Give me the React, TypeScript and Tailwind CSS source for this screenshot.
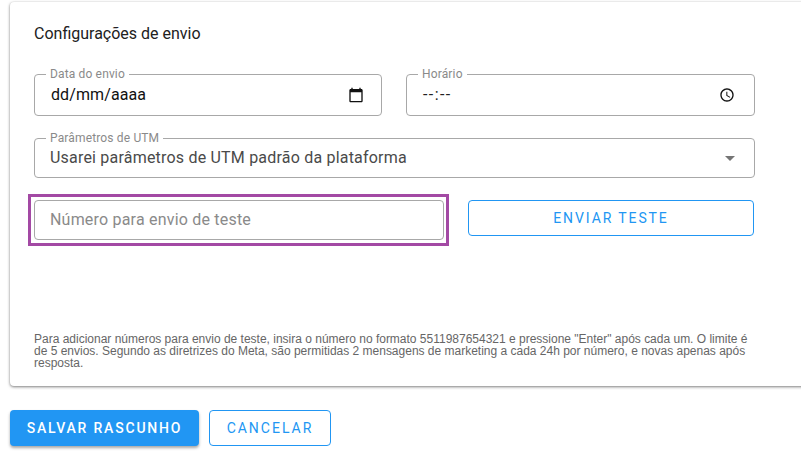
import { ReactNode } from 'react';

const FONT = "font-['Roboto',_'Liberation_Sans',_sans-serif]";

// campo com legenda sobre a borda
function Field({ label, className, children }: { label: string; className: string; children: ReactNode }) {
  return (
    <div className={`relative flex items-center rounded border border-[#a8a8a8] pl-[15px] pr-[17px] ${className}`}>
      <span className="absolute left-[11px] top-[-9px] bg-white px-[4px] text-[12px] leading-[16px] tracking-[0.15px] text-[#8a8a8a]">
        {label}
      </span>
      {children}
    </div>
  );
}

export default function App() {
  return (
    <div className={`h-[460px] w-[801px] overflow-hidden bg-white ${FONT}`}>
      <div className="pl-[10px] pt-[2px]">
        <div className="flex h-[384px] w-[800px] flex-col rounded-l-[4px] bg-white pl-[24px] pt-[22px] shadow-[0_1px_3px_rgba(0,0,0,0.5),0_0_2px_rgba(0,0,0,0.06)]">
          <h2 className="text-[16px] leading-[20px] text-[#212121]">Configurações de envio</h2>

          <div className="mt-[30px] flex gap-[24px]">
            <Field label="Data do envio" className="h-[42px] w-[348px] justify-between">
              <span className="pl-[1px] text-[16px] tracking-[0.1px] text-[#111]">dd/mm/aaaa</span>
              <svg width="16" height="16" viewBox="0 0 24 24" fill="#111">
                <path d="M20 3h-1V1h-2v2H7V1H5v2H4c-1.1 0-2 .9-2 2v16c0 1.1.9 2 2 2h16c1.1 0 2-.9 2-2V5c0-1.100-.9-2-2-2zm0 18H4V8h16v13z" />
              </svg>
            </Field>
            <Field label="Horário" className="h-[42px] w-[349px] justify-between">
              <span className="pl-[1px] text-[16px] tracking-[1.4px] text-[#222]">--:--</span>
              <svg width="16" height="16" viewBox="0 0 24 24" className="mr-[2px]" fill="#111">
                <path d="M11.99 2C6.470 2 2 6.480 2 12s4.470 10 9.990 10C17.520 22 22 17.520 22 12S17.520 2 11.990 2zM12 20c-4.420 0-8-3.580-8-8s3.580-8 8-8 8 3.580 8 8-3.580 8-8 8zm.5-13H11v6l5.250 3.150.75-1.230-4.500-2.670z" />
              </svg>
            </Field>
          </div>

          <Field label="Parâmetros de UTM" className="mt-[22px] h-[40px] w-[721px] justify-between">
            <span className="text-[16px] tracking-[0.2px] text-[#4a4a4a]">Usarei parâmetros de UTM padrão da plataforma</span>
            <svg width="24" height="24" viewBox="0 0 24 24" className="mr-[-5px]" fill="#757575">
              <path d="M7 10l5 5 5-5z" />
            </svg>
          </Field>

          <div className="mt-[16px] ml-[-6px] flex items-start">
            <div className="h-[52px] w-[421px] border-[3px] border-[#a349a4] p-[3px]">
              <div className="flex h-[40px] w-[410px] items-center rounded border border-[#a8a8a8] pl-[15px] text-[16px] tracking-[0.2px] text-[#8a8a8a]">
                Número para envio de teste
              </div>
            </div>
            <button className="ml-[19px] mt-[6px] h-[36px] w-[286px] rounded border border-[#2196f3] text-[14px] tracking-[1.9px] text-[#2196f3]">
              ENVIAR TESTE
            </button>
          </div>

          <p className="mt-[87px] w-[722px] font-['Liberation_Sans',_sans-serif] text-[12px] leading-[12px] tracking-[-0.005px] text-[#666]">
            Para adicionar números para envio de teste, insira o número no formato 5511987654321 e pressione "Enter" após cada um. O limite é de 5 envios. Segundo as diretrizes do Meta, são permitidas 2 mensagens de marketing a cada 24h por número, e novas apenas após resposta.
          </p>
        </div>

        <div className="mt-[24px] flex gap-[10px]">
          <button className="h-[36px] w-[189px] rounded bg-[#2196f3] text-[14px] font-medium tracking-[1.8px] text-white shadow-[0_2px_3px_rgba(0,0,0,0.35)]">
            SALVAR RASCUNHO
          </button>
          <button className="h-[36px] w-[122px] rounded border border-[#2196f3] text-[14px] tracking-[2px] text-[#2196f3]">
            CANCELAR
          </button>
        </div>
      </div>
    </div>
  );
}
